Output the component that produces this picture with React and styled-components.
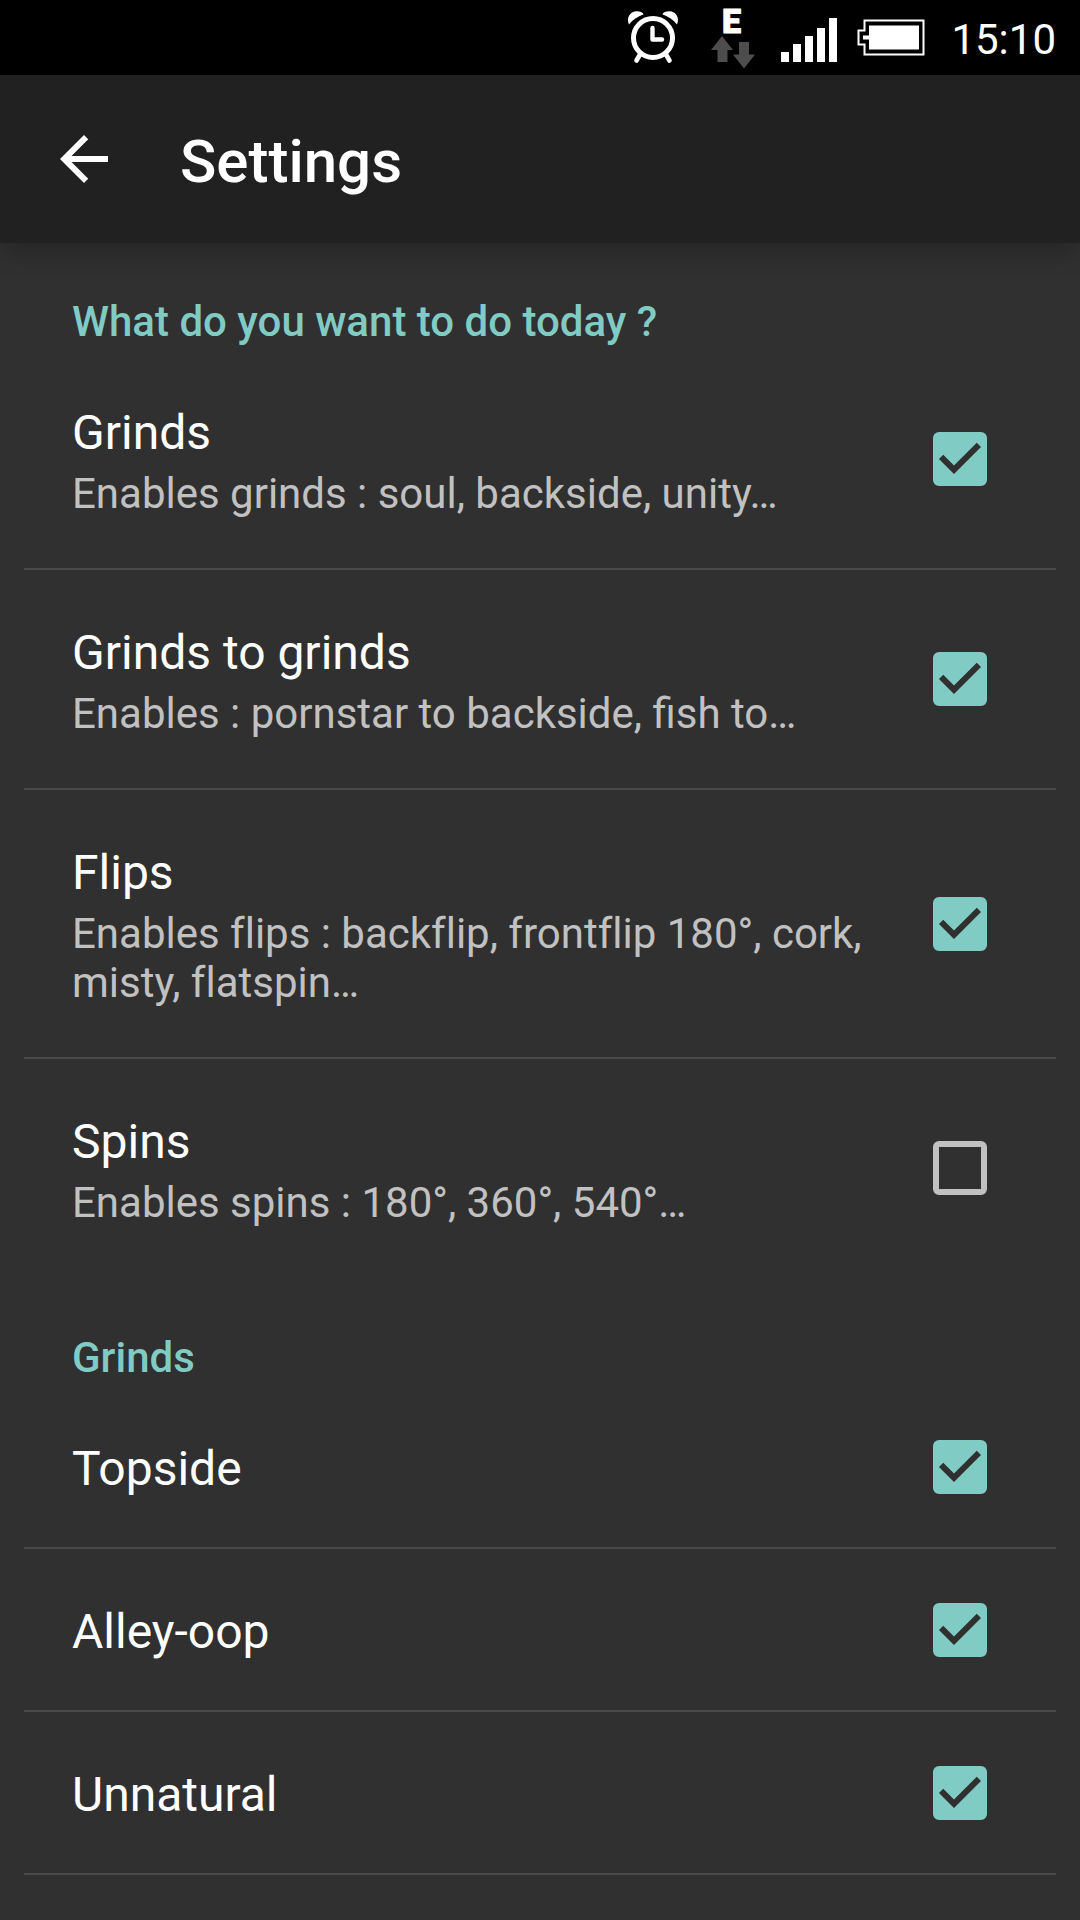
import { useState } from "react";
import styled, { createGlobalStyle } from "styled-components";

const sections = [
  {
    title: "What do you want to do today ?",
    items: [
      { id: "grinds", label: "Grinds", summary: "Enables grinds : soul, backside, unity…", on: true },
      { id: "grinds-to-grinds", label: "Grinds to grinds", summary: "Enables : pornstar to backside, fish to…", on: true, ligatures: true },
      { id: "flips", label: "Flips", summary: "Enables flips : backflip, frontflip 180°, cork, misty, flatspin…", on: true },
      { id: "spins", label: "Spins", summary: "Enables spins : 180°, 360°, 540°…", on: false },
    ],
  },
  {
    title: "Grinds",
    items: [
      { id: "topside", label: "Topside", on: true },
      { id: "alley-oop", label: "Alley-oop", on: true },
      { id: "unnatural", label: "Unnatural", on: true },
    ],
    more: true,
  },
];

const AlarmIcon = () => (
  <svg width="64" height="75" viewBox="0 0 64 75" aria-label="Alarm set">
    <g fill="none" stroke="#fff" strokeLinecap="round">
      <circle cx="26" cy="38" r="19.5" strokeWidth="5" />
      <path d="M25.5 28v11.500h9.500" strokeWidth="4.4" strokeLinejoin="round" />
      <path d="M13 54.500L9.500 60.500M39 54.500L42.500 60.500" strokeWidth="4.600" />
    </g>
    <path d="M2 24.500C-1 18 3 11.500 9.500 11.300C13 11.200 15.500 12.500 16.700 14.300C10.500 16.500 5.500 20 2 24.500Z" fill="#fff" />
    <path d="M50 24.500C53 18 49 11.500 42.500 11.300C39 11.200 36.500 12.500 35.300 14.300C41.500 16.500 46.500 20 50 24.500Z" fill="#fff" />
  </svg>
);

const DataIcon = () => (
  <svg width="50" height="75" viewBox="0 0 50 75" aria-label="Mobile data">
    <DataType x="11" y="33">E</DataType>
    <path d="M11 36L22 50H16.500V62H6.500V50H0Z" fill="#4d4d4d" />
    <path d="M33 68.500L44 54.500H38V42H28V54.500H22Z" fill="#4d4d4d" />
  </svg>
);

const SignalIcon = () => (
  <svg width="56" height="75" viewBox="0 0 56 75" aria-label="Signal strength">
    <path d="M0 52h8v10H0zM12 44h8v18h-8zM24 36h8v26h-8zM36 28h8v34h-8zM48 18h8v44h-8z" fill="#fff" />
  </svg>
);

const BatteryIcon = () => (
  <svg width="74" height="75" viewBox="0 0 74 75" aria-label="Battery">
    <path d="M7.500 20.500H66.500V54.500H7.500V44.500H1.500V30.500H7.500Z" fill="none" stroke="#fff" strokeWidth="2" />
    <path d="M12 25.500H62V49.500H12V39.500H6V35.500H12Z" fill="#fff" />
  </svg>
);

const Preference = ({ item, divider }) => {
  const [checked, setChecked] = useState(item.on);

  return (
    <Row $divider={divider}>
      <Label htmlFor={item.id}>
        <Name>{item.label}</Name>
        {item.summary && <Summary $ligatures={item.ligatures}>{item.summary}</Summary>}
      </Label>
      <Tick>
        <Checkbox
          type="checkbox"
          id={item.id}
          checked={checked}
          onChange={(e) => setChecked(e.target.checked)}
        />
        {checked && (
          <svg viewBox="3 3 18 18" aria-hidden="true">
            <path d="M10 17l-5-5 1.410-1.410L10 14.170l7.590-7.590L19 8z" fill="#303030" />
          </svg>
        )}
      </Tick>
    </Row>
  );
};

const App = () => {
  return (
    <Screen>
      <GlobalStyle />
      <StatusBar>
        <AlarmIcon />
        <DataIcon />
        <SignalIcon />
        <BatteryIcon />
        <Clock>15:10</Clock>
      </StatusBar>
      <Toolbar>
        <BackButton aria-label="Back">
          <svg width="72" height="72" viewBox="0 0 24 24" aria-hidden="true">
            <path d="M20 11H7.830l5.590-5.590L12 4l-8 8 8 8 1.410-1.410L7.830 13H20v-2z" fill="#fff" />
          </svg>
        </BackButton>
        <Title>Settings</Title>
      </Toolbar>
      <List>
        {sections.map((section) => (
          <section key={section.title}>
            <Category>{section.title}</Category>
            {section.items.map((item, i) => (
              <Preference
                key={item.id}
                item={item}
                divider={section.more || i < section.items.length - 1}
              />
            ))}
          </section>
        ))}
      </List>
    </Screen>
  );
};

const GlobalStyle = createGlobalStyle`
  * {
    box-sizing: border-box;
  }

  body {
    margin: 0;
    background-color: #303030;
    color: white;
    font-family: Roboto, sans-serif;
  }
`;

const Screen = styled.div`
  display: flex;
  flex-direction: column;
  min-height: 100vh;
  overflow-x: hidden;
`;

const StatusBar = styled.div`
  display: flex;
  justify-content: flex-end;
  align-items: center;
  gap: 20px;
  height: 75px;
  padding-right: 24px;
  background-color: black;
`;

const DataType = styled.text`
  font-family: Roboto, sans-serif;
  font-size: 34px;
  font-weight: 900;
  fill: white;
  stroke: white;
  stroke-width: 1px;
  stroke-linejoin: round;
`;

const Clock = styled.time`
  font-size: 42px;
  line-height: 49px;
  padding-top: 4px;
`;

const Toolbar = styled.header`
  display: flex;
  align-items: center;
  gap: 60px;
  height: 168px;
  padding: 0 48px;
  background-color: #212121;
  box-shadow: 0 12px 24px -4px rgba(0, 0, 0, 0.24);
`;

const BackButton = styled.button`
  display: flex;
  padding: 0;
  border: none;
  background: none;
  cursor: pointer;
`;

const Title = styled.h1`
  margin: 0;
  padding-top: 6px;
  font-size: 60px;
  line-height: 70px;
  font-weight: 500;
`;

const List = styled.main`
  display: flex;
  flex-direction: column;
  gap: 2px;
  padding: 0 24px;
`;

const Category = styled.h2`
  margin: 0;
  padding: 54px 48px 4px;
  font-size: 42px;
  line-height: 49px;
  font-weight: 500;
  color: #80cbc4;
`;

const Row = styled.div`
  display: flex;
  align-items: center;
  gap: 48px;
  padding-left: 48px;
  padding-right: 69px;
  border-bottom: ${(props) => (props.$divider ? "2px solid #494949" : "none")};
`;

const Label = styled.label`
  flex: 1;
  padding: 54px 0 50px;
  cursor: pointer;
`;

const Name = styled.span`
  display: block;
  font-size: 48px;
  line-height: 57px;
  font-variant-ligatures: none;
`;

const Summary = styled.span`
  display: block;
  margin-top: 8px;
  font-size: 42px;
  line-height: 49px;
  font-variant-ligatures: ${(props) => (props.$ligatures ? "normal" : "none")};
  color: #c1c1c1;
`;

const Tick = styled.span`
  display: grid;
  width: 54px;
  height: 54px;

  > * {
    grid-area: 1 / 1;
  }

  svg {
    pointer-events: none;
  }
`;

const Checkbox = styled.input`
  appearance: none;
  width: 54px;
  height: 54px;
  margin: 0;
  border: 6px solid #c1c1c1;
  border-radius: 6px;
  cursor: pointer;

  &:checked {
    border-color: #80cbc4;
    background-color: #80cbc4;
  }
`;

export default App;
